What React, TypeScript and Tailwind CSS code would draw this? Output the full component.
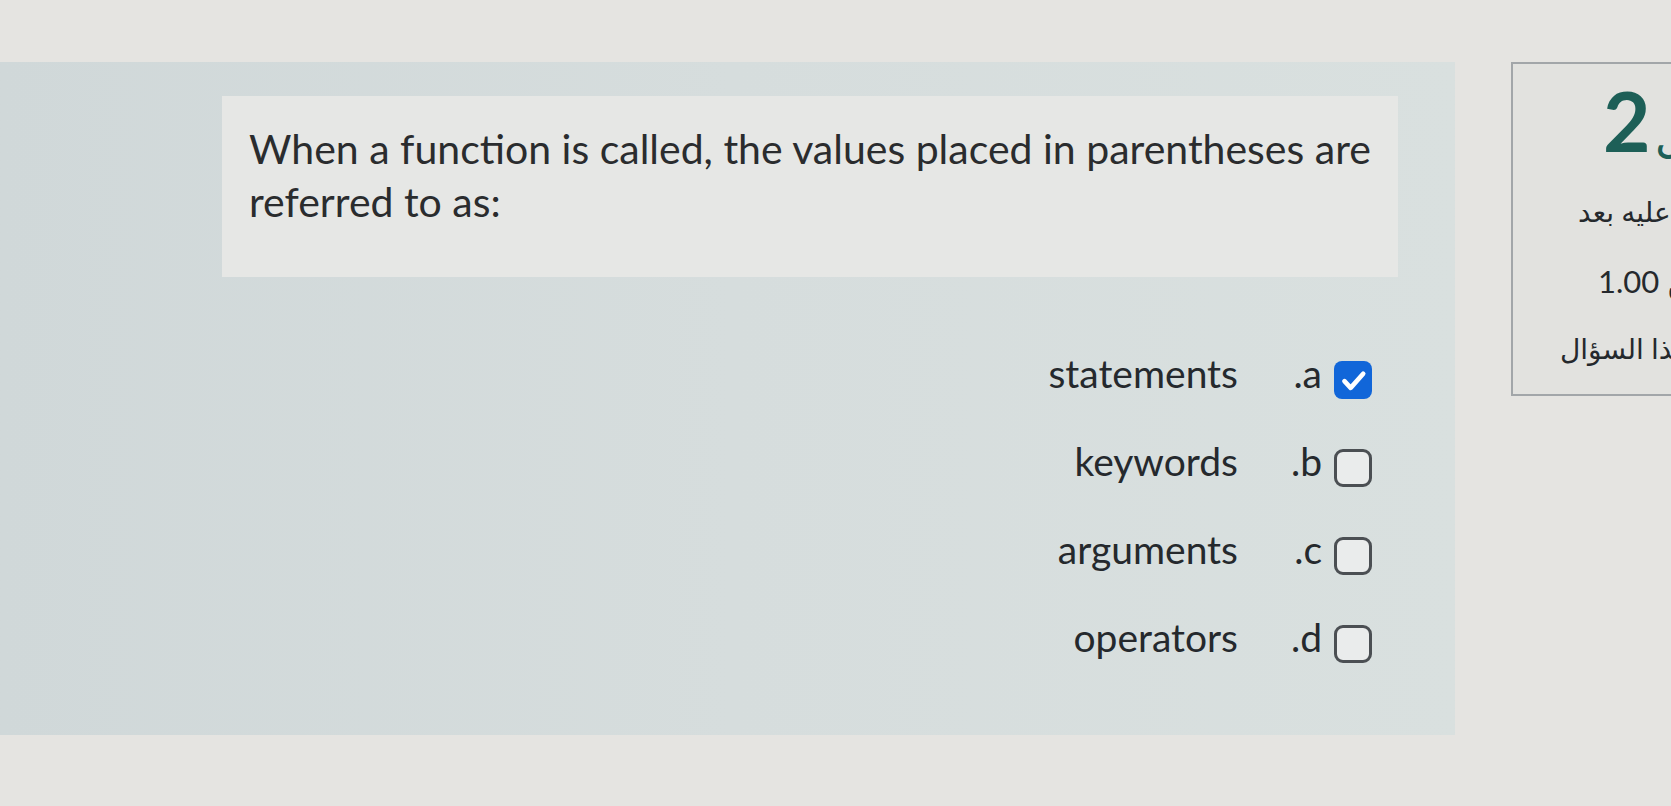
// Quiz question page (RTL Moodle layout) - single multiple choice question

const options = [
  { letter: '.a', text: 'statements', checked: true },
  { letter: '.b', text: 'keywords', checked: false },
  { letter: '.c', text: 'arguments', checked: false },
  { letter: '.d', text: 'operators', checked: false },
];

function CheckBox({ checked }: { checked: boolean }) {
  if (checked) {
    return (
      <span className="ml-[12px] flex h-[38px] w-[38px] shrink-0 items-center justify-center rounded-[8px] bg-[#1166d9]">
        <svg viewBox="0 0 24 24" className="h-[31px] w-[31px]" fill="none">
          <path
            d="M5 12.5l4.8 5.2L19.5 6.8"
            stroke="#ffffff"
            strokeWidth="3.6"
            strokeLinecap="round"
            strokeLinejoin="round"
          />
        </svg>
      </span>
    );
  }
  return (
    <span className="ml-[12px] block h-[38px] w-[38px] shrink-0 rounded-[9px] border-[3px] border-[#4b4f53] bg-[#eaecec]" />
  );
}

export default function App() {
  return (
    <div className="relative h-[806px] w-full overflow-hidden bg-[#e5e4e1] font-['Lato','DejaVu_Sans',sans-serif] text-[#25292d]">
      <div className="flex items-start pt-[62px]">
        {/* Question content */}
        <div className="h-[673px] w-[1455px] shrink-0 bg-gradient-to-r from-[#d0d8d9] via-[#d6dddd] to-[#d9e0df] pl-[222px] pr-[57px] pt-[34px]">
          <div className="h-[181px] bg-[#e6e7e5] px-[27px] pt-[26px]">
            <p className="text-[41px] leading-[53px] text-[#2a2c2e]">
              When a function is called, the values placed in parentheses are
              referred to as:
            </p>
          </div>

          <div className="mt-[59px] pr-[26px]">
            {options.map((opt) => (
              <div key={opt.letter} className="flex h-[88px] items-center justify-end">
                <span className="pb-[14px] text-[39px] leading-[46px]">{opt.text}</span>
                <span className="w-[84px] pb-[14px] text-right text-[39px] leading-[46px]">
                  {opt.letter}
                </span>
                <CheckBox checked={opt.checked} />
              </div>
            ))}
          </div>
        </div>

        {/* Question info box */}
        <div className="ml-[56px] h-[334px] w-[500px] shrink-0 border-2 border-[#a2a6a9] bg-[#e2e2df]">
          <div dir="rtl" className="whitespace-nowrap pl-[90px] pt-[15px] text-left leading-none text-[#1d5f57]">
            <span className="text-[46px]">السؤال</span>{' '}
            <span className="text-[82px] font-bold">2</span>
          </div>
          <div dir="rtl" className="mt-[32px] whitespace-nowrap pl-[65px] text-left text-[28px] leading-[36px]">
            لم تتم الإجابة عليه بعد
          </div>
          <div dir="rtl" className="mt-[32px] whitespace-nowrap pl-[85px] text-left text-[31px] leading-[40px]">
            الدرجة من 1.00
          </div>
          <div dir="rtl" className="mt-[28px] whitespace-nowrap pl-[47px] text-left text-[28px] leading-[38px]">
            علّم هذا السؤال
          </div>
        </div>
      </div>
    </div>
  );
}
